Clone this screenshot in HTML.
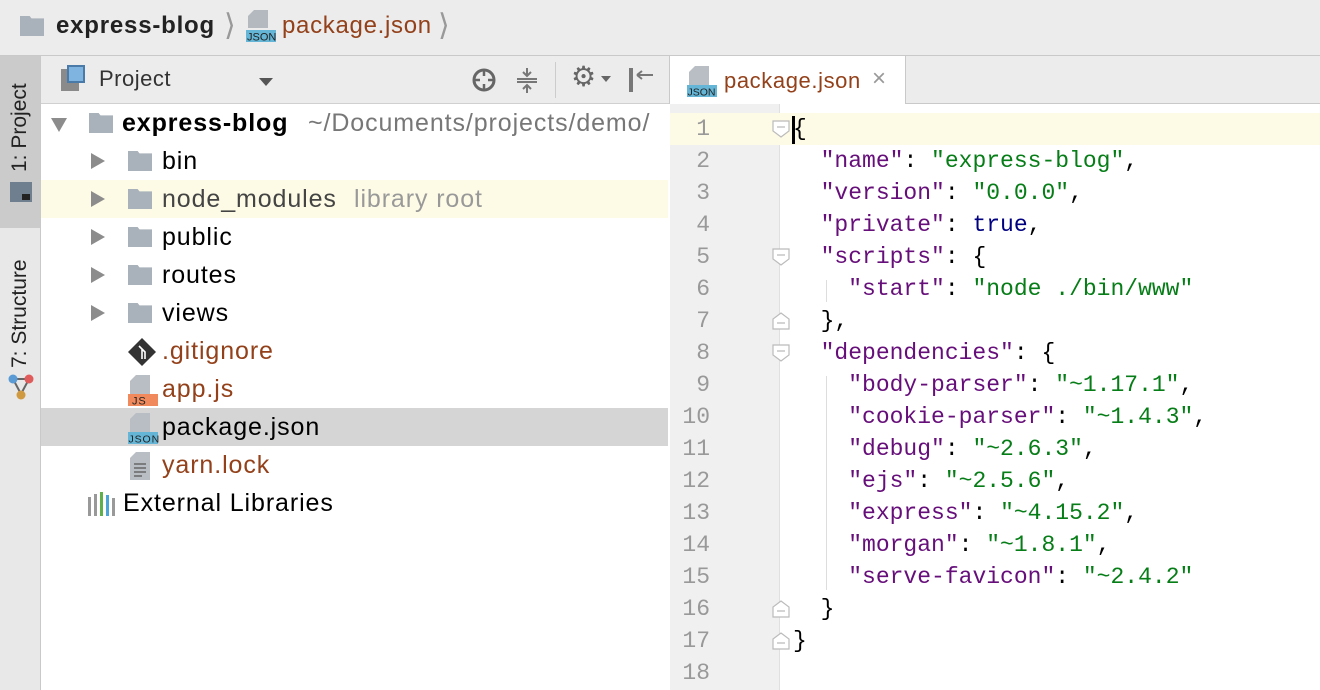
<!DOCTYPE html>
<html><head><meta charset="utf-8"><style>
*{margin:0;padding:0;box-sizing:border-box}
body{width:1320px;height:690px;overflow:hidden;background:#fff;font-family:"Liberation Sans",sans-serif;position:relative}
.abs{position:absolute}
.top{left:0;top:0;width:1320px;height:56px;background:#ececec;border-bottom:1px solid #c9c9c9}
.strip{left:0;top:56px;width:41px;height:634px;background:#e8e8e8;border-right:1px solid #c9c9c9}
.ptab{left:0;top:56px;width:40px;height:172px;background:#cbcbcb}
.vt{position:absolute;transform:rotate(-90deg);transform-origin:left top;font-size:21px;color:#222;white-space:nowrap}
.phead{left:41px;top:56px;width:628px;height:48px;background:#ececec;border-bottom:1px solid #d0d0d0}
.row{position:absolute;left:41px;width:627px;height:38px;font-size:25px;letter-spacing:0.9px;line-height:38px;color:#000;white-space:nowrap;overflow:hidden}
.fold{position:absolute;width:24px;height:20px;background:#a9b2ba;clip-path:polygon(0 0,40% 0,48% 12%,100% 12%,100% 100%,0 100%)}
.tri{position:absolute;width:0;height:0;border-top:8px solid transparent;border-bottom:8px solid transparent;border-left:14px solid #8c8c8c}
.br{color:#93411a}
.ehead{left:669px;top:56px;width:651px;height:48px;background:#ececec;border-bottom:1px solid #c9c9c9;border-left:1px solid #c9c9c9}
.tab{left:670px;top:56px;width:236px;height:48px;background:#fff;border-right:1px solid #c9c9c9}
.gut{left:670px;top:104px;width:110px;height:586px;background:#f0f0f0;border-right:1px solid #e0e0e0}
.cl{position:absolute;left:670px;width:650px;height:32px;font-family:"Liberation Mono","DejaVu Sans Mono",monospace;font-size:23px;line-height:32px;white-space:pre}
.ln{position:absolute;left:0;width:40px;text-align:right;color:#999}
.code{position:absolute;left:123px}
.k{color:#660e7a}.s{color:#067d17}.t{color:#000080}
</style></head><body>
<div class="abs top">
  <div class="fold" style="left:20px;top:16px"></div>
  <div class="abs" style="left:56px;top:12px;font-size:24px;letter-spacing:0.8px;font-weight:bold;color:#222">express-blog</div>
  <div class="abs" style="left:224px;top:8px;font-size:30px;color:#999">⟩</div>
  <svg class="abs" style="left:246px;top:10px" width="30" height="34"><path d="M8 0h14v18H2V6z" fill="#b3b9bf"/><rect x="0" y="20" width="30" height="12" fill="#64b5d6"/><text x="1" y="30.5" font-size="11" font-family="Liberation Sans" fill="#222">JSON</text></svg>
  <div class="abs br" style="left:282px;top:12px;font-size:24px;letter-spacing:0.7px">package.json</div>
  <div class="abs" style="left:438px;top:8px;font-size:30px;color:#999">⟩</div>
</div>
<div class="abs strip"></div>
<div class="abs ptab"></div>
<div class="vt" style="left:8px;top:172px">1: Project</div>
<div class="abs" style="left:10px;top:182px;width:22px;height:20px;background:#6f7f8f"></div>
<div class="abs" style="left:22px;top:194px;width:8px;height:6px;background:#222"></div>
<div class="vt" style="left:8px;top:368px">7: Structure</div>
<svg class="abs" style="left:8px;top:374px" width="26" height="28"><line x1="5" y1="5" x2="21" y2="5" stroke="#666" stroke-width="2"/><line x1="5" y1="5" x2="13" y2="20" stroke="#666" stroke-width="2"/><line x1="21" y1="5" x2="13" y2="20" stroke="#666" stroke-width="2"/><circle cx="5" cy="5" r="4.5" fill="#5b9bd5"/><circle cx="21" cy="5" r="4.5" fill="#e05c5c"/><circle cx="13" cy="21" r="4.5" fill="#d09a40"/></svg>

<div class="abs phead">
  <div class="abs" style="left:20px;top:13px;width:18px;height:22px;background:#8a8a8a"></div>
  <div class="abs" style="left:26px;top:9px;width:18px;height:18px;background:#7fb3e0;border:2px solid #4a7aa8"></div>
  <div class="abs" style="left:58px;top:10px;font-size:22px;letter-spacing:0.5px;color:#333">Project</div>
  <div class="abs" style="left:218px;top:22px;border-left:7px solid transparent;border-right:7px solid transparent;border-top:8px solid #555"></div>
  <svg class="abs" style="left:430px;top:11px" width="26" height="26"><circle cx="13" cy="13" r="10" fill="none" stroke="#666" stroke-width="3"/><path d="M13 2v7M13 17v7M2 13h7M17 13h7" stroke="#666" stroke-width="2.5"/></svg>
  <svg class="abs" style="left:474px;top:10px" width="24" height="28"><path d="M2 13h20M2 16h20M12 2v8M8 6l4 4 4-4M12 27v-8M8 23l4-4 4 4" stroke="#777" stroke-width="2" fill="none"/></svg>
  <div class="abs" style="left:514px;top:6px;width:1px;height:36px;background:#ccc"></div>
  <div class="abs" style="left:530px;top:4px;font-size:28px;color:#666">⚙</div>
  <div class="abs" style="left:560px;top:20px;border-left:5px solid transparent;border-right:5px solid transparent;border-top:6px solid #666"></div>
  <svg class="abs" style="left:586px;top:10px" width="30" height="28"><rect x="2" y="2" width="4" height="24" fill="#777"/><path d="M10 9h16M10 9l5-4M10 9l5 4" stroke="#777" stroke-width="2" fill="none"/></svg>
</div>

<div class="row" style="top:104px"><div class="tri" style="left:10px;top:14px;border-left:8px solid transparent;border-right:8px solid transparent;border-top:14px solid #8c8c8c;border-bottom:0"></div><div class="fold" style="left:48px;top:9px"></div><span style="position:absolute;left:81px;font-weight:bold">express-blog</span><span style="position:absolute;left:267px;color:#777">~/Documents/projects/demo/</span></div>
<div class="row" style="top:142px"><div class="tri" style="left:50px;top:11px"></div><div class="fold" style="left:87px;top:9px"></div><span style="position:absolute;left:121px">bin</span></div>
<div class="row" style="top:180px;background:#fdfbe6"><div class="tri" style="left:50px;top:11px"></div><div class="fold" style="left:87px;top:9px"></div><span style="position:absolute;left:121px;color:#444">node_modules</span><span style="position:absolute;left:313px;color:#999">library root</span></div>
<div class="row" style="top:218px"><div class="tri" style="left:50px;top:11px"></div><div class="fold" style="left:87px;top:9px"></div><span style="position:absolute;left:121px">public</span></div>
<div class="row" style="top:256px"><div class="tri" style="left:50px;top:11px"></div><div class="fold" style="left:87px;top:9px"></div><span style="position:absolute;left:121px">routes</span></div>
<div class="row" style="top:294px"><div class="tri" style="left:50px;top:11px"></div><div class="fold" style="left:87px;top:9px"></div><span style="position:absolute;left:121px">views</span></div>
<div class="row" style="top:332px"><svg style="position:absolute;left:86px;top:5px" width="30" height="30"><path d="M15 1L29 15 15 29 1 15z" fill="#333"/><path d="M12 9l6 6v7M15 12v10" stroke="#fff" stroke-width="1.6" fill="none"/></svg><span class="br" style="position:absolute;left:121px">.gitignore</span></div>
<div class="row" style="top:370px"><svg style="position:absolute;left:86px;top:3px" width="32" height="34"><path d="M9 2h14v20H3V8z" fill="#b8bec4"/><rect x="1" y="21" width="30" height="12" fill="#f08a5d"/><text x="5" y="31.5" font-size="11" font-family="Liberation Sans" fill="#222">JS</text></svg><span class="br" style="position:absolute;left:121px">app.js</span></div>
<div class="row" style="top:408px;background:#d5d5d5"><svg style="position:absolute;left:86px;top:3px" width="32" height="34"><path d="M9 2h14v20H3V8z" fill="#b8bec4"/><rect x="1" y="21" width="30" height="12" fill="#64b5d6"/><text x="1.5" y="31.5" font-size="10.5" font-family="Liberation Sans" fill="#222">JSON</text></svg><span style="position:absolute;left:121px">package.json</span></div>
<div class="row" style="top:446px"><svg style="position:absolute;left:86px;top:4px" width="32" height="32"><path d="M9 2h14v28H3V8z" fill="#b8bec4"/><path d="M7 14h12M7 18h12M7 22h12M7 26h8" stroke="#666" stroke-width="1.5"/></svg><span class="br" style="position:absolute;left:121px">yarn.lock</span></div>
<div class="row" style="top:484px"><svg style="position:absolute;left:47px;top:8px" width="30" height="24"><rect x="0" y="5" width="3" height="19" fill="#999"/><rect x="6" y="2" width="3" height="22" fill="#999"/><rect x="12" y="0" width="3" height="24" fill="#5fb04a"/><rect x="18" y="3" width="3" height="21" fill="#4ba3d8"/><rect x="24" y="6" width="3" height="18" fill="#999"/></svg><span style="position:absolute;left:82px">External Libraries</span></div>

<div class="abs ehead"></div>
<div class="abs tab">
  <svg class="abs" style="left:16px;top:8px" width="32" height="34"><path d="M9 2h14v20H3V8z" fill="#b8bec4"/><rect x="1" y="21" width="30" height="12" fill="#64b5d6"/><text x="1.5" y="31.5" font-size="10.5" font-family="Liberation Sans" fill="#222">JSON</text></svg>
  <div class="abs br" style="left:54px;top:12px;font-size:22px;letter-spacing:0.6px">package.json</div>
  <div class="abs" style="left:202px;top:9px;font-size:24px;color:#999">×</div>
</div>
<div class="abs" style="left:670px;top:104px;width:650px;height:8px;background:#fff"></div>
<div class="abs gut"></div>
<div class="abs" style="left:670px;top:113px;width:650px;height:32px;background:#fdfae6"></div>
<div class="abs" style="left:792px;top:116px;width:3px;height:28px;background:#000"></div>

<div class="cl" style="top:113px"><span class="ln">1</span><span class="code">{</span></div>
<div class="cl" style="top:145px"><span class="ln">2</span><span class="code">  <span class="k">"name"</span>: <span class="s">"express-blog"</span>,</span></div>
<div class="cl" style="top:177px"><span class="ln">3</span><span class="code">  <span class="k">"version"</span>: <span class="s">"0.0.0"</span>,</span></div>
<div class="cl" style="top:209px"><span class="ln">4</span><span class="code">  <span class="k">"private"</span>: <span class="t">true</span>,</span></div>
<div class="cl" style="top:241px"><span class="ln">5</span><span class="code">  <span class="k">"scripts"</span>: {</span></div>
<div class="cl" style="top:273px"><span class="ln">6</span><span class="code">    <span class="k">"start"</span>: <span class="s">"node ./bin/www"</span></span></div>
<div class="cl" style="top:305px"><span class="ln">7</span><span class="code">  },</span></div>
<div class="cl" style="top:337px"><span class="ln">8</span><span class="code">  <span class="k">"dependencies"</span>: {</span></div>
<div class="cl" style="top:369px"><span class="ln">9</span><span class="code">    <span class="k">"body-parser"</span>: <span class="s">"~1.17.1"</span>,</span></div>
<div class="cl" style="top:401px"><span class="ln">10</span><span class="code">    <span class="k">"cookie-parser"</span>: <span class="s">"~1.4.3"</span>,</span></div>
<div class="cl" style="top:433px"><span class="ln">11</span><span class="code">    <span class="k">"debug"</span>: <span class="s">"~2.6.3"</span>,</span></div>
<div class="cl" style="top:465px"><span class="ln">12</span><span class="code">    <span class="k">"ejs"</span>: <span class="s">"~2.5.6"</span>,</span></div>
<div class="cl" style="top:497px"><span class="ln">13</span><span class="code">    <span class="k">"express"</span>: <span class="s">"~4.15.2"</span>,</span></div>
<div class="cl" style="top:529px"><span class="ln">14</span><span class="code">    <span class="k">"morgan"</span>: <span class="s">"~1.8.1"</span>,</span></div>
<div class="cl" style="top:561px"><span class="ln">15</span><span class="code">    <span class="k">"serve-favicon"</span>: <span class="s">"~2.4.2"</span></span></div>
<div class="cl" style="top:593px"><span class="ln">16</span><span class="code">  }</span></div>
<div class="cl" style="top:625px"><span class="ln">17</span><span class="code">}</span></div>
<div class="cl" style="top:657px"><span class="ln">18</span></div>
<div class="abs" style="left:826px;top:280px;width:1px;height:22px;background:#ddd"></div>
<div class="abs" style="left:826px;top:376px;width:1px;height:214px;background:#ddd"></div>

<svg class="abs" style="left:771px;top:120px" width="20" height="530">
<g fill="#fff" stroke="#bbb" stroke-width="1.2">
<path d="M2 1h16v10l-8 6-8-6z"/>
<path d="M2 129h16v10l-8 6-8-6z"/>
<path d="M2 209h16v-10l-8-6-8 6z"/>
<path d="M2 225h16v10l-8 6-8-6z"/>
<path d="M2 497h16v-10l-8-6-8 6z"/>
<path d="M2 529h16v-10l-8-6-8 6z"/>
</g>
<g stroke="#bbb" stroke-width="1.2"><path d="M6 7h8M6 135h8M6 203h8M6 231h8M6 491h8M6 523h8"/></g>
</svg>
</body></html>
